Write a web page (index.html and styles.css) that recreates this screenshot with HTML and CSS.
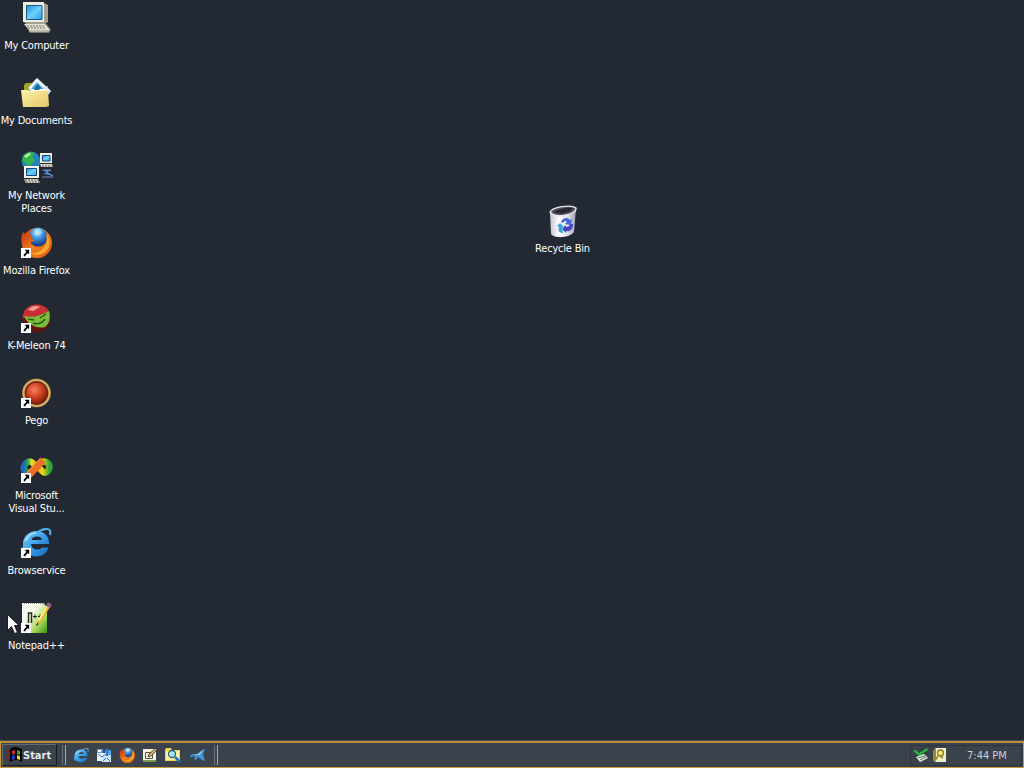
FILE: index.html
```html
<!DOCTYPE html>
<html lang="en">
  <head>
    <meta charset="UTF-8" />
    <meta name="viewport" content="width=device-width, initial-scale=1.0" />
    <title>Desktop</title>
    <link rel="stylesheet" href="styles.css">
  </head>
  <body>
    <svg class="defs" aria-hidden="true">
      <defs>
        <linearGradient id="screen" x2="1" y2="1">
          <stop offset="0" stop-color="#1c8fe0" />
          <stop offset=".5" stop-color="#6fd2f8" />
          <stop offset="1" stop-color="#2a9bea" />
        </linearGradient>
        <linearGradient id="folder" y2="1">
          <stop offset="0" stop-color="#fff3a6" />
          <stop offset="1" stop-color="#e2c766" />
        </linearGradient>
        <linearGradient id="blue" x2="1" y2="1">
          <stop offset="0" stop-color="#8cd6ff" />
          <stop offset=".5" stop-color="#3a9fe8" />
          <stop offset="1" stop-color="#1765b8" />
        </linearGradient>
        <linearGradient id="fox" x2="1" y2="1">
          <stop offset="0" stop-color="#c9330f" />
          <stop offset=".5" stop-color="#f0801c" />
          <stop offset="1" stop-color="#dd5512" />
        </linearGradient>
        <radialGradient id="globe" cx=".45" cy=".25" r=".7">
          <stop offset="0" stop-color="#b5e6ff" />
          <stop offset=".5" stop-color="#3b8ed6" />
          <stop offset="1" stop-color="#123a86" />
        </radialGradient>
        <radialGradient id="red" cx=".4" cy=".35" r=".7">
          <stop offset="0" stop-color="#f6805f" />
          <stop offset=".5" stop-color="#cf4323" />
          <stop offset="1" stop-color="#7e1a0c" />
        </radialGradient>
        <linearGradient id="bin" x2="1">
          <stop offset="0" stop-color="#c5c5d3" />
          <stop offset=".35" stop-color="#ffffff" />
          <stop offset=".7" stop-color="#dcdcea" />
          <stop offset="1" stop-color="#9d9db8" />
        </linearGradient>
        <linearGradient id="page" y2="1">
          <stop offset=".35" stop-color="#f7faee" />
          <stop offset=".7" stop-color="#a6d85b" />
          <stop offset="1" stop-color="#35920f" />
        </linearGradient>
        <linearGradient id="loopLeft" x2="1">
          <stop offset="0" stop-color="#1d66c9" />
          <stop offset=".3" stop-color="#27a848" />
          <stop offset=".6" stop-color="#e8e323" />
          <stop offset="1" stop-color="#f39b1b" />
        </linearGradient>
        <linearGradient id="loopRight" x2="1">
          <stop offset="0" stop-color="#f07a18" />
          <stop offset=".5" stop-color="#f4d51b" />
          <stop offset="1" stop-color="#27a637" />
        </linearGradient>
        <symbol id="shortcut" viewBox="0 0 11 11">
          <path d="M0 0h11v11H0z" fill="#fff" />
          <path d="M4 2h5v5L7.500 5.500 5 8v1H3V7.500L6 4z" fill="#000" />
        </symbol>
        <symbol id="ie" viewBox="0 0 32 32">
          <path d="M29 18H11c.5 4 3 5.500 6 5.500 2.500 0 4-.5 5-2h6.500c-2 6-6 9-12 9C8 30.500 3 25.500 3 18S9 5 16.500 5 29.500 10 29 18zM11.500 14h10.500c-.5-2.500-2-3.500-5-3.500s-5 1-5.500 3.500z" fill="url(#blue)" fill-rule="evenodd" />
          <path d="M5 27C-1 27 6 13 18 6c7-4 14-5 12 3" fill="none" stroke="#4fb0ec" stroke-width="2.200" />
          <path d="M6 15c1-4 5-8 10-8" fill="none" stroke="#b3e4ff" stroke-width="1.500" />
        </symbol>
        <symbol id="firefox" viewBox="0 0 32 32">
          <circle cx="17" cy="17" r="15" fill="url(#fox)" />
          <circle cx="18" cy="11" r="9.500" fill="url(#globe)" />
          <path d="M15 4l5-1 2 4-4 3-4-2z" fill="#c6ebfa" opacity=".6" />
          <path d="M3 6l4 3 5-1-1 4 4 3-4 1c-1 5 3 8 8 7 6-1 9-6 7-15 7 7 6 15 1 20-6 6-16 5-21-1C1 20 0 12 3 6z" fill="url(#fox)" />
          <path d="M27 9c5 8 2 16-5 19-4 2-8 1-11-1 8 1 17-5 16-18z" fill="#f9aa2d" />
        </symbol>
      </defs>
    </svg>

    <main class="desktop">
      <div class="icons">
        <div class="icon">
          <svg viewBox="0 0 34 34">
            <path d="M4 2l18-1 6 3v17l-3 2H6l-2-2z" fill="#a3a091" />
            <path d="M3 1h21v20H3z" fill="#efeddf" />
            <path d="M6.500 4.500h15.500v14H6.500z" fill="url(#screen)" stroke="#16578c" />
            <path d="M5 23h22l4 6-2 3H10z" fill="#77756d" />
            <path d="M4 23h21l5 6H9z" fill="#e2e0d6" />
            <path d="M7 25h17M8 27h18" stroke="#757466" stroke-dasharray="2 1" />
            <path d="M9 30h20" stroke="#bcb9aa" stroke-width="2" />
          </svg>
          <span class="label">My Computer</span>
        </div>
        <div class="icon">
          <svg viewBox="0 0 34 34">
            <path d="M4 9l2-2h7l2 3h13v16H4z" fill="#a6a51e" />
            <path d="M17 2l14 13-8 10L8 12z" fill="#f6fbff" stroke="#8ca9c4" stroke-width=".6" />
            <path d="M17 6l7 7H11z" fill="#4ba9dc" />
            <path d="M15 11l3-3 3 4-2 2h-5z" fill="#206c9f" />
            <path d="M24 11l5 5" stroke="#7ba0c2" stroke-dasharray="1 1" />
            <path d="M1 14l13 1 2-1h12l1 16-3 1H3z" fill="url(#folder)" />
            <path d="M1.500 14.500L14 15.500l2-1h12" fill="none" stroke="#fffbd2" />
          </svg>
          <span class="label">My Documents</span>
        </div>
        <div class="icon">
          <svg viewBox="0 0 34 34">
            <circle cx="11" cy="10" r="9.500" fill="#2384bd" />
            <path d="M4 4l5-3 6 1-3 4 3 3-4 5-4 1-2-4-3-1z" fill="#35b448" />
            <path d="M4 5l5-3 2 1-5 4z" fill="#b9f49d" />
            <path d="M20 2h12v10H20z" fill="#eeeee3" />
            <path d="M22.500 4.500h7.500v5.500h-7.500z" fill="url(#screen)" stroke="#15477c" />
            <path d="M20 13h12l1 3H21z" fill="#d5d3c6" />
            <path d="M22 15h11" stroke="#6e6c65" stroke-dasharray="2 1" />
            <path d="M4 15h15v12H4z" fill="#f5f5eb" />
            <path d="M6.500 17.500h10v7h-10z" fill="url(#screen)" stroke="#15477c" />
            <path d="M4 28h14l2 4H6z" fill="#d5d3c6" />
            <path d="M5 29h14M6 31h14" stroke="#626057" stroke-dasharray="2 1" />
            <path d="M22 19h7l-3 2 8 4-11-2 4-2z" fill="#3d79df" />
            <path d="M23 19h8l-5 2 7 4M22 26h11" fill="none" stroke="#86b8f2" stroke-width=".7" />
          </svg>
          <span class="label">My Network<br>Places</span>
        </div>
        <div class="icon">
          <svg viewBox="0 0 34 34">
            <use href="#firefox" width="32" height="32" />
            <use href="#shortcut" x="1" y="22" width="10" height="10" />
          </svg>
          <span class="label">Mozilla Firefox</span>
        </div>
        <div class="icon">
          <svg viewBox="0 0 34 34">
            <circle cx="16.500" cy="17.500" r="14" fill="#60150f" />
            <path d="M2.500 17C3 8 9 3.500 16.500 3.500c7 0 12 4 13.500 9L12 16z" fill="#c92f36" />
            <path d="M8 9c3-4 8-5 12-3l-7 4z" fill="#f3a093" />
            <path d="M4 15c8 2 16 0 25-5 2 8 0 13-4 16-8 2-17-2-21-11z" fill="#7cbb3c" />
            <path d="M8 18l6 1M20 17l6-4M13 22c5 2 9 0 12-4" fill="none" stroke="#2b5c12" stroke-width="1.500" />
            <use href="#shortcut" x="1" y="22" width="10" height="10" />
          </svg>
          <span class="label">K-Meleon 74</span>
        </div>
        <div class="icon">
          <svg viewBox="0 0 34 34">
            <circle cx="16.500" cy="17" r="14.500" fill="#8b5928" />
            <circle cx="16.500" cy="17" r="13" fill="none" stroke="#d3ad6b" stroke-width="2.200" />
            <circle cx="16.500" cy="17" r="11.500" fill="#67200f" />
            <circle cx="16.500" cy="17" r="10.500" fill="url(#red)" />
            <use href="#shortcut" x="1" y="22" width="10" height="10" />
          </svg>
          <span class="label">Pego</span>
        </div>
        <div class="icon">
          <svg viewBox="0 0 34 34">
            <path d="M17 17l-4-5q-3-3-7 0-4 4-1 8 3 3 8 1" fill="none" stroke="url(#loopLeft)" stroke-width="6.500" />
            <path d="M15 13l7 7q3 3 6 0 3-4 0-8-4-3-8 0" fill="none" stroke="url(#loopRight)" stroke-width="6.500" />
            <path d="M8 25L23 9" stroke="#ea6f26" stroke-width="7" />
            <path d="M7 22L20 8" stroke="#ff9e47" />
            <use href="#shortcut" x="1" y="22" width="10" height="10" />
          </svg>
          <span class="label">Microsoft<br>Visual Stu...</span>
        </div>
        <div class="icon">
          <svg viewBox="0 0 34 34">
            <use href="#ie" width="32" height="32" />
            <use href="#shortcut" x="1" y="22" width="10" height="10" />
          </svg>
          <span class="label">Browservice</span>
        </div>
        <div class="icon">
          <svg viewBox="0 0 34 34">
            <path d="M2 2h21l4 4v26H2z" fill="url(#page)" />
            <path d="M4 2.500h21" stroke="#8f9a8d" stroke-dasharray="1 1" />
            <path d="M8.500 22V12h3v10" fill="none" stroke="#23311f" stroke-width="1.500" />
            <path d="M13 15.500h4M15 13.500v4M18 15.500h4M20 13.500v4" stroke="#23311f" />
            <path d="M16 25l2-6L27 4l3 2-9 15z" fill="#e7b52c" />
            <path d="M18 19L27 4l1 1-8 15z" fill="#fff08a" />
            <path d="M26 5l2-4 4 3-2 3z" fill="#9b5d88" />
            <path d="M16 25l1-3 2 1z" fill="#222" />
            <use href="#shortcut" x="1" y="22" width="10" height="10" />
          </svg>
          <span class="label">Notepad++</span>
        </div>
      </div>

      <div class="icon recycle-bin">
        <svg viewBox="0 0 34 34">
          <path d="M4 8l1 22c4 5 18 4 23-2l2-23z" fill="url(#bin)" />
          <path d="M4 8c2-5 21-8 26-4 1 7-21 11-26 4z" fill="#53525a" stroke="#e9e9f3" stroke-width="1.300" />
          <path d="M8 8c4-3 13-5 19-4l-2 3C18 10 12 10 8 8z" fill="#28262e" />
          <path d="M15 18c2-5 7-5 9-2l2-1-1 6-6-1 2-2c-2-2-3-1-4 1z" fill="#4665d7" />
          <path d="M27 20c0 6-4 8-7 7v2l-4-4 4-4v2c2 0 4-1 4-3z" fill="#4347c5" />
          <path d="M14 19l4 4-2 1 1 5c-5 0-5-4-4-6l-2-1z" fill="#32a7df" />
        </svg>
        <span class="label">Recycle Bin</span>
      </div>

      <svg class="cursor" viewBox="0 0 12 21">
        <path d="M.5.5v16l4-4 3 7 3-1-3-7H12z" fill="#fff" stroke="#000" stroke-width=".8" />
      </svg>
    </main>

    <footer class="taskbar">
      <button class="start-button">
        <svg viewBox="0 0 17 16">
          <path d="M0 4h2v2H0zM2 7h2v2H2zM0 10h2v2H0zM3 3h2v2H3zM3 12h2v2H3z" fill="#721a22" />
          <path d="M5 2c4-3 7-2 12 0v13c-5-3-8-2-12 0z" fill="#000" />
          <path d="M7 4l3-1v4L7 8z" fill="#c92b2b" />
          <path d="M12 3l3 1v4l-3-1z" fill="#38a532" />
          <path d="M7 9l3-1v4l-3 1z" fill="#2938c8" />
          <path d="M12 8l3 1v4l-3-1z" fill="#e4d126" />
        </svg>
        <span>Start</span>
      </button>
      <div class="grip"></div>
      <nav class="quick-launch">
        <svg viewBox="0 0 32 32"><use href="#ie" /></svg>
        <svg viewBox="0 0 16 16">
          <path d="M1 2h6v6H1zM9 3h6v5H9z" fill="#5aa2e4" />
          <path d="M2 3h3v2H2z" fill="#fff" />
          <path d="M1 6h10v8H1z" fill="#e8f4ff" />
          <path d="M6 8h9v7H6z" fill="#cfe5fa" />
          <path d="M2 7l4 3 4-3M7 14l3-3M14 14l-3-3" fill="none" stroke="#2a76c4" />
          <path d="M8 4l3-3 3 3h-2v5h-2V4z" fill="#2878cf" />
        </svg>
        <svg viewBox="0 0 32 32"><use href="#firefox" /></svg>
        <svg viewBox="0 0 16 16">
          <path d="M1 2h13v13H1z" fill="#f3f2df" />
          <path d="M1 13h13v2H1z" fill="#7e9951" />
          <path d="M3.500 5.500h7v6h-7z" fill="none" stroke="#525547" />
          <path d="M6 10l1-3 7-6 1 2-6 6z" fill="#e3b36b" stroke="#332b1c" stroke-width=".8" />
        </svg>
        <svg viewBox="0 0 16 16">
          <path d="M0 3l1-2h5l1 2h8v11H0z" fill="#ead64b" />
          <path d="M1 4h13v9H1z" fill="#fff1a0" />
          <circle cx="7" cy="7" r="3.500" fill="#b0e3f5" stroke="#24607d" stroke-width="1.300" />
          <path d="M10 10l5 5" stroke="#1c75c5" stroke-width="2.500" />
        </svg>
        <svg class="plane" viewBox="0 0 16 16">
          <path d="M0 8l7-1 5-4 3-1-2 5 2 7-3-1-4-3-2 3-2-1 1-3-5 1z" fill="#3f95d6" />
          <path d="M1 8l7-1 5-4-3 5z" fill="#91ccec" />
        </svg>
      </nav>
      <div class="grip"></div>
      <div class="tray">
        <svg viewBox="0 0 16 16">
          <path d="M1 7l9-5 5 3-9 5z" fill="#2c4636" />
          <path d="M0 4l3-1 3 3 8-5 1 2-9 6z" fill="#28b84a" />
          <path d="M3 10l8-3 4 4-8 4z" fill="#e7eee9" />
          <path d="M5 11l7-2M7 13l6-3" stroke="#55725d" />
        </svg>
        <svg viewBox="0 0 16 16">
          <path d="M3 1h11v14H3z" fill="#f0edcf" />
          <path d="M1 14V4l3-3v13z" fill="#958c36" />
          <circle cx="8.500" cy="6" r="3" fill="#f6e675" stroke="#8b7822" stroke-width="1.300" />
          <path d="M6 9l-3 5M8 9l3 2" stroke="#a18b23" stroke-width="1.600" />
        </svg>
        <span class="clock">7:44 PM</span>
      </div>
    </footer>
  </body>
</html>
```

FILE: styles.css
```css
* {
  box-sizing: border-box;
}
body {
  margin: 0;
  height: 768px;
  display: flex;
  flex-direction: column;
  overflow: hidden;
  background-color: #222933;
  color: #fff;
  font-family: "DejaVu Sans Condensed", "DejaVu Sans", sans-serif;
  font-stretch: condensed;
  font-size: 11px;
}
.defs {
  position: absolute;
  width: 0;
  height: 0;
}
.desktop {
  position: relative;
  flex: 1;
}
.icons {
  display: flex;
  flex-direction: column;
  width: 73px;
}
.icon {
  height: 75px;
  padding-top: 1px;
  display: flex;
  flex-direction: column;
  align-items: center;
}
.icon svg {
  width: 34px;
  height: 34px;
  flex: none;
}
.icons .icon svg {
  margin-left: 1px;
}
.label {
  margin-top: 4px;
  line-height: 13px;
  letter-spacing: -0.2px;
  text-align: center;
  white-space: nowrap;
}
.recycle-bin {
  position: absolute;
  left: 525px;
  top: 203px;
  width: 75px;
}
.cursor {
  position: absolute;
  left: 7px;
  top: 614px;
  width: 12px;
  height: 21px;
}
.taskbar {
  flex: none;
  height: 27px;
  display: flex;
  align-items: center;
  padding: 0 1px 0 1px;
  background-color: #3a424c;
  border: 1px solid #c79a3c;
  border-top: 2px solid #b58d3b;
  box-shadow: 0 -1px #4d4f5c;
}
.start-button {
  width: 55px;
  height: 22px;
  padding: 0 0 0 2px;
  display: flex;
  align-items: center;
  gap: 1px;
  background-color: #3a424c;
  border: 1px solid #626a72;
  border-right-color: #171c22;
  border-bottom-color: #171c22;
  color: #e3e8ec;
  font-family: "DejaVu Sans Condensed", "DejaVu Sans", sans-serif;
  font-size: 11px;
  font-weight: bold;
}
.start-button svg {
  width: 17px;
  height: 16px;
  flex: none;
}
.grip {
  width: 4px;
  height: 20px;
  margin-left: 5px;
  border-left: 1px solid #68717a;
  border-right: 1px solid #a3aab0;
}
.quick-launch {
  display: flex;
  gap: 7px;
  margin-left: 7px;
}
.quick-launch svg,
.tray svg {
  width: 16px;
  height: 16px;
}
.quick-launch .plane {
  margin-left: 2px;
}
.quick-launch + .grip {
  margin-left: 8px;
}
.tray {
  margin-left: auto;
  width: 112px;
  height: 21px;
  display: flex;
  align-items: center;
  gap: 3px;
  padding-left: 2px;
  border: 1px solid #2c343e;
}
.clock {
  margin-left: 16px;
  color: #c9d1d8;
}
```
